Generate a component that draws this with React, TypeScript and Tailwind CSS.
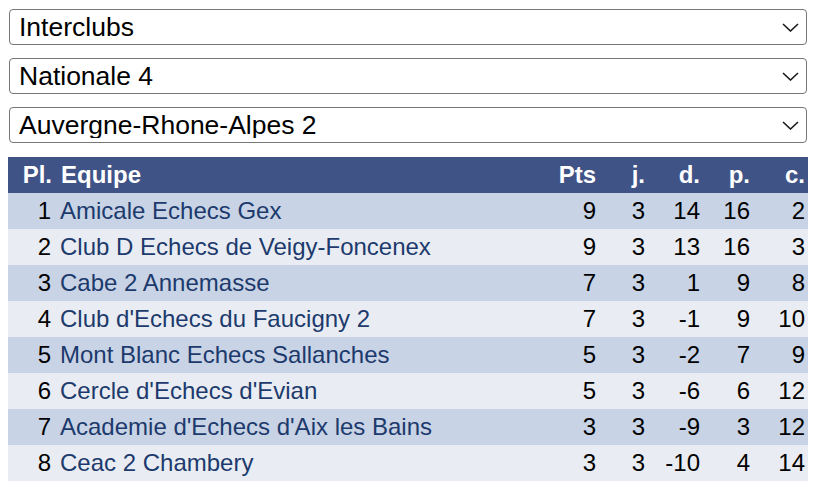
import React from 'react';

interface Row {
  pl: number;
  equipe: string;
  pts: number;
  j: number;
  d: number;
  p: number;
  c: number;
}

const rows: Row[] = [
  { pl: 1, equipe: 'Amicale Echecs Gex', pts: 9, j: 3, d: 14, p: 16, c: 2 },
  { pl: 2, equipe: 'Club D Echecs de Veigy-Foncenex', pts: 9, j: 3, d: 13, p: 16, c: 3 },
  { pl: 3, equipe: 'Cabe 2 Annemasse', pts: 7, j: 3, d: 1, p: 9, c: 8 },
  { pl: 4, equipe: "Club d'Echecs du Faucigny 2", pts: 7, j: 3, d: -1, p: 9, c: 10 },
  { pl: 5, equipe: 'Mont Blanc Echecs Sallanches', pts: 5, j: 3, d: -2, p: 7, c: 9 },
  { pl: 6, equipe: "Cercle d'Echecs d'Evian", pts: 5, j: 3, d: -6, p: 6, c: 12 },
  { pl: 7, equipe: "Academie d'Echecs d'Aix les Bains", pts: 3, j: 3, d: -9, p: 3, c: 12 },
  { pl: 8, equipe: 'Ceac 2 Chambery', pts: 3, j: 3, d: -10, p: 4, c: 14 },
];

const Select: React.FC<{ value: string }> = ({ value }) => (
  <div className="relative mx-[1px]">
    <select
      value={value}
      onChange={() => {}}
      className="appearance-none w-full h-[36px] border border-[#767676] rounded-[4px] bg-white pl-[9px] pr-10 text-[26.5px] leading-none text-black focus:outline-none"
    >
      <option>{value}</option>
    </select>
    <svg
      className="absolute right-[8px] top-[14px] pointer-events-none"
      width="17"
      height="9"
      viewBox="0 0 17 9"
      fill="none"
    >
      <path d="M1 1L8.5 8L16 1" stroke="#1a1a1a" strokeWidth="1.6" />
    </svg>
  </div>
);

export default function App() {
  return (
    <div className="w-[820px] h-[488px] bg-white px-2 pt-[9px] font-['Liberation_Sans',Arial,sans-serif]">
      <div className="w-[800px] flex flex-col gap-[13px]">
        <Select value="Interclubs" />
        <Select value="Nationale 4" />
        <Select value="Auvergne-Rhone-Alpes 2" />
      </div>

      {/* Classement */}
      <div className="mt-[14px] w-[800px] text-[24px] leading-none">
        <div className="grid grid-cols-[47px_1fr_50px_49px_55px_50px_55px] h-[36px] items-center bg-[#3f5387] text-white font-bold">
          <div className="text-right pr-[3px]">Pl.</div>
          <div className="pl-[6px]">Equipe</div>
          <div className="text-right pr-[3px]">Pts</div>
          <div className="text-right pr-[3px]">j.</div>
          <div className="text-right pr-[3px]">d.</div>
          <div className="text-right pr-[3px]">p.</div>
          <div className="text-right pr-[3px]">c.</div>
        </div>
        {rows.map((r, i) => (
          <div
            key={r.pl}
            className={`grid grid-cols-[47px_1fr_50px_49px_55px_50px_55px] h-[36px] items-center text-black ${i % 2 === 0 ? 'bg-[#c8d3e5]' : 'bg-[#e9edf3]'}`}
          >
            <div className="text-right pr-[4px]">{r.pl}</div>
            <div className="pl-[5px] text-[#1d3a6d] whitespace-nowrap">{r.equipe}</div>
            <div className="text-right pr-[3px]">{r.pts}</div>
            <div className="text-right pr-[3px]">{r.j}</div>
            <div className="text-right pr-[3px]">{r.d}</div>
            <div className="text-right pr-[3px]">{r.p}</div>
            <div className="text-right pr-[3px]">{r.c}</div>
          </div>
        ))}
      </div>
    </div>
  );
}
